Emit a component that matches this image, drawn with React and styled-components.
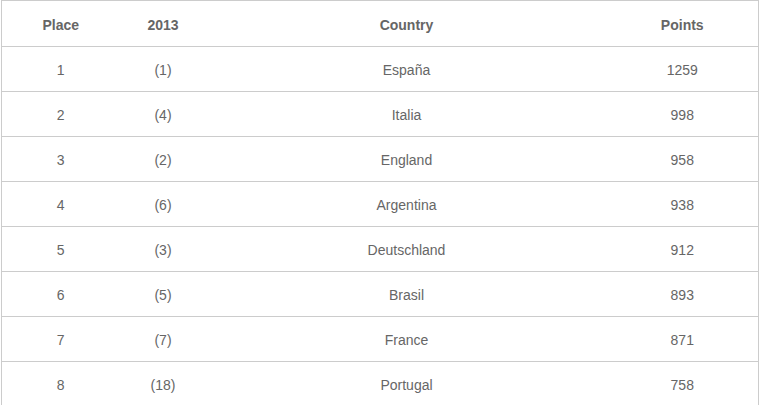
import styled, { createGlobalStyle } from "styled-components";

const GlobalStyle = createGlobalStyle`
  body {
    margin: 0;
    background: #fff;
    font-family: "Liberation Sans", Arial, sans-serif;
  }
`;

const rows = [
  { place: 1, prev: 1, country: "España", points: 1259 },
  { place: 2, prev: 4, country: "Italia", points: 998 },
  { place: 3, prev: 2, country: "England", points: 958 },
  { place: 4, prev: 6, country: "Argentina", points: 938 },
  { place: 5, prev: 3, country: "Deutschland", points: 912 },
  { place: 6, prev: 5, country: "Brasil", points: 893 },
  { place: 7, prev: 7, country: "France", points: 871 },
  { place: 8, prev: 18, country: "Portugal", points: 758 },
];

const Wrapper = styled.div`
  padding: 0 1px;
`;

const Table = styled.table`
  width: 757px;
  border-collapse: collapse;
  table-layout: fixed;
  color: #666;
  font-size: 14px;
`;

const Cell = styled.td`
  padding: 15px 0 13px;
  line-height: 16px;
  text-align: center;
  border: 1px solid #ccc;
  border-left: ${(p) => (p.$first ? "1px solid #ccc" : "none")};
  border-right: ${(p) => (p.$last ? "1px solid #ccc" : "none")};
`;

const HeadCell = styled(Cell).attrs({ as: "th" })`
  padding: 16px 0 13px;
  font-weight: bold;
  color: #666;
`;

const App = () => {
  return (
    <Wrapper>
      <GlobalStyle />
      <Table>
        <colgroup>
          <col style={{ width: 118 }} />
          <col style={{ width: 87 }} />
          <col style={{ width: 400 }} />
          <col style={{ width: 152 }} />
        </colgroup>
        <thead>
          <tr>
            <HeadCell $first>Place</HeadCell>
            <HeadCell>2013</HeadCell>
            <HeadCell>Country</HeadCell>
            <HeadCell $last>Points</HeadCell>
          </tr>
        </thead>
        <tbody>
          {rows.map((r) => (
            <tr key={r.place}>
              <Cell $first>{r.place}</Cell>
              <Cell>({r.prev})</Cell>
              <Cell>{r.country}</Cell>
              <Cell $last>{r.points}</Cell>
            </tr>
          ))}
        </tbody>
      </Table>
    </Wrapper>
  );
};

export default App;
